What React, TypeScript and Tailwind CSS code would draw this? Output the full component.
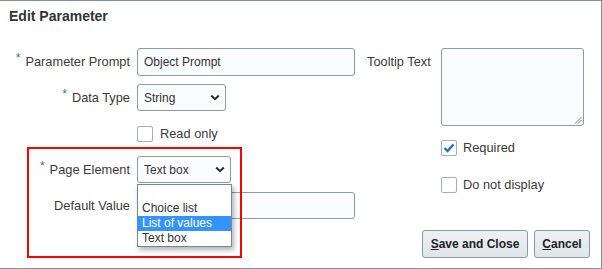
import React from "react";

const Chevron = () => (
  <svg width="10" height="7" viewBox="0 0 10 7" className="shrink-0">
    <polyline points="1.2,1.5 5,5.2 8.8,1.5" fill="none" stroke="#2b2b2b" strokeWidth="2" />
  </svg>
);

const Star = () => (
  <span className="text-[#2f6fb0] text-[12px] leading-none mr-[5px] relative top-[-4px]">*</span>
);

const Label = ({ children, req }: { children: React.ReactNode; req?: boolean }) => (
  <div className="w-[130px] flex items-center justify-end text-[12.8px] text-[#3a3a3a] whitespace-nowrap">
    {req && <Star />}
    <span>{children}</span>
  </div>
);

const Checkbox = ({ checked }: { checked?: boolean }) => (
  <div className="w-[16px] h-[16px] border border-[#a3aeb7] rounded-[2px] bg-white flex items-center justify-center shrink-0">
    {checked && (
      <svg width="12" height="10" viewBox="0 0 12 10">
        <polyline points="1.5,5 4.5,8 10.5,1.5" fill="none" stroke="#1e73c9" strokeWidth="2.4" />
      </svg>
    )}
  </div>
);

export default function App() {
  return (
    <div className="relative w-[602px] h-[269px] border-t border-r border-b border-[#7f909c] bg-white font-['Liberation_Sans',Arial,sans-serif] overflow-hidden">
      <div className="pt-[6px] pl-[9px] leading-[18px] text-[14px] font-bold text-[#333333]">Edit Parameter</div>
      <div className="mt-[23px] flex">
        {/* left column */}
        <div className="w-[355px] flex flex-col">
          <div className="flex items-center h-[28px]">
            <Label req>Parameter Prompt</Label>
            <div className="ml-[7px] w-[218px] h-[28px] border border-[#8d9ba6] rounded-[3px] bg-[#fbfcfe] flex items-center pl-[6px] text-[12px] text-[#333333]">
              Object Prompt
            </div>
          </div>
          <div className="mt-[8px] flex items-center h-[27px]">
            <Label req>Data Type</Label>
            <div className="ml-[7px] w-[89px] h-[27px] border border-[#8d9ba6] rounded-[3px] bg-[#fbfcfe] flex items-center justify-between pl-[6px] pr-[5px] text-[12px] text-[#333333]">
              <span>String</span>
              <Chevron />
            </div>
          </div>
          <div className="mt-[15px] flex items-center h-[16px]">
            <div className="w-[137px]" />
            <Checkbox />
            <span className="ml-[7px] text-[12.8px] text-[#3a3a3a]">Read only</span>
          </div>
          <div className="mt-[14px] flex items-center h-[27px]">
            <Label req>Page Element</Label>
            <div className="ml-[7px] w-[94px] h-[27px] border border-[#8d9ba6] rounded-[3px] bg-[#fbfcfe] flex items-center justify-between pl-[6px] pr-[5px] text-[12px] text-[#333333]">
              <span>Text box</span>
              <Chevron />
            </div>
          </div>
          <div className="mt-[9px] flex items-center h-[27px]">
            <Label>Default Value</Label>
            <div className="ml-[7px] w-[218px] h-[27px] border border-[#8d9ba6] rounded-[3px] bg-[#fbfcfe]" />
          </div>
        </div>
        {/* right column */}
        <div className="ml-[12px] flex-1 flex flex-col">
          <div className="flex items-start">
            <div className="w-[74px] h-[28px] flex items-center text-[12.8px] text-[#3a3a3a] whitespace-nowrap">Tooltip Text</div>
            <div className="relative w-[143px] h-[78px] border border-[#8d9ba6] rounded-[3px] bg-[#fbfcfe]">
              <svg width="8" height="8" viewBox="0 0 8 8" className="absolute right-[1px] bottom-[1px]">
                <line x1="1" y1="7.5" x2="7.5" y2="1" stroke="#666" strokeWidth="0.8" />
                <line x1="4" y1="7.5" x2="7.5" y2="4" stroke="#666" strokeWidth="0.8" />
              </svg>
            </div>
          </div>
          <div className="mt-[14px] ml-[74px] flex items-center h-[16px]">
            <Checkbox checked />
            <span className="ml-[6px] text-[12.8px] text-[#3a3a3a]">Required</span>
          </div>
          <div className="mt-[21px] ml-[74px] flex items-center h-[16px]">
            <Checkbox />
            <span className="ml-[6px] text-[12.8px] text-[#3a3a3a]">Do not display</span>
          </div>
          <div className="mt-[37px] flex justify-end gap-[6px] pr-[11px]">
            <button className="w-[106px] h-[28px] border border-[#8c9aa5] rounded-[3px] bg-gradient-to-b from-[#eef1f4] to-[#e0e5ea] text-[12px] font-bold text-[#222222]">
              <span className="underline">S</span>ave and Close
            </button>
            <button className="w-[56px] h-[28px] border border-[#8c9aa5] rounded-[3px] bg-gradient-to-b from-[#eef1f4] to-[#e0e5ea] text-[12px] font-bold text-[#222222]">
              <span className="underline">C</span>ancel
            </button>
          </div>
        </div>
      </div>

      {/* dropdown list overlay */}
      <div className="absolute left-[137px] top-[183px] w-[95px] border border-[#7a8893] bg-white shadow-[2px_3px_5px_rgba(0,0,0,0.3)] text-[12px] text-[#333333]">
        <div className="h-[16px]" />
        <div className="h-[15px] leading-[15px] pl-[4px]">Choice list</div>
        <div className="h-[15px] leading-[15px] pl-[4px] bg-[#3394ff] text-white">List of values</div>
        <div className="h-[15px] leading-[15px] pl-[4px]">Text box</div>
      </div>

      {/* red annotation box */}
      <div className="absolute left-[27px] top-[146px] w-[215px] h-[111px] border-2 border-[#ff0000] pointer-events-none" />
    </div>
  );
}
